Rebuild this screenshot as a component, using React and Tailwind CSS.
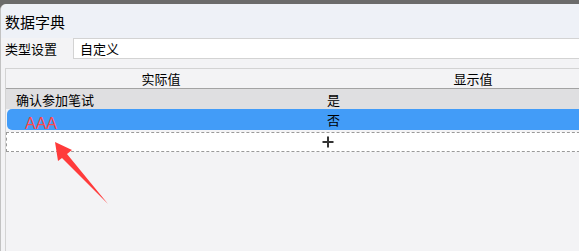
const cjk = { fontFamily: '"Noto Sans CJK SC", "Noto Sans", sans-serif' };

const App = () => {
  return (
    <div className="relative w-[579px] h-[251px] overflow-hidden bg-[#6b6b6b] pt-[4px]" style={cjk}>
      {/* Window */}
      <div className="flex flex-col h-[247px] rounded-tl-[6px] border-l border-[#c2c2c2] bg-[#f3f3f5] text-black">
        {/* Title bar */}
        <div className="h-[34px] flex items-center pl-[4px] bg-[#eef1f7] rounded-tl-[6px] text-[15px] leading-none">
          数据字典
        </div>

        {/* Type setting row */}
        <div className="flex h-[21px]">
          <div className="w-[72px] flex items-center pl-[4px] text-[13px] leading-none">类型设置</div>
          <div className="flex-1 flex items-center bg-white border-y border-l border-[#d3d3d3] pl-[6px] text-[13px] leading-none">
            自定义
          </div>
        </div>

        {/* Table */}
        <div className="mt-[9px] ml-[4px] flex-1 w-[640px] border-t border-l border-[#d3d3d3] flex flex-col text-[13px] leading-none">
          <div className="flex h-[20px] border-b border-[#a3a3a3]">
            <div className="w-[310px] flex items-center justify-center">实际值</div>
            <div className="w-[314px] flex items-center justify-center">显示值</div>
          </div>
          <div className="flex h-[20px] bg-[#dfdfe1]">
            <div className="w-[310px] flex items-center pl-[10px]">确认参加笔试</div>
            <div className="flex items-center pl-[11px]">是</div>
          </div>
          <div className="flex h-[21px] ml-[1px] bg-[#429cf8] rounded-l-[5px]">
            <div className="w-[309px]" />
            <div className="flex items-center pl-[11px]">否</div>
          </div>
          <div className="mt-[2px] flex h-[20px] bg-white border-y border-l border-dashed border-[#9a9a9a]">
            <div className="w-[309px]" />
            <div className="flex items-center pl-[6px]">
              <svg width="12" height="12" viewBox="0 0 12 12">
                <path d="M6 0.5v11M0.5 6h11" stroke="#333" strokeWidth="2" fill="none" />
              </svg>
            </div>
          </div>
        </div>
      </div>

      {/* Annotation */}
      <div
        className="absolute left-[25px] top-[116px] text-[16px] leading-none text-[#ff4848]"
        style={{ fontFamily: '"Liberation Sans", Arial, sans-serif' }}
      >
        AAA
      </div>
      <svg className="absolute left-0 top-0 pointer-events-none" width="579" height="251">
        <polygon points="55,142 72,150 67,154 108,204 62,158 58,161" fill="#ff3b3b" />
      </svg>
    </div>
  );
};

export default App;
